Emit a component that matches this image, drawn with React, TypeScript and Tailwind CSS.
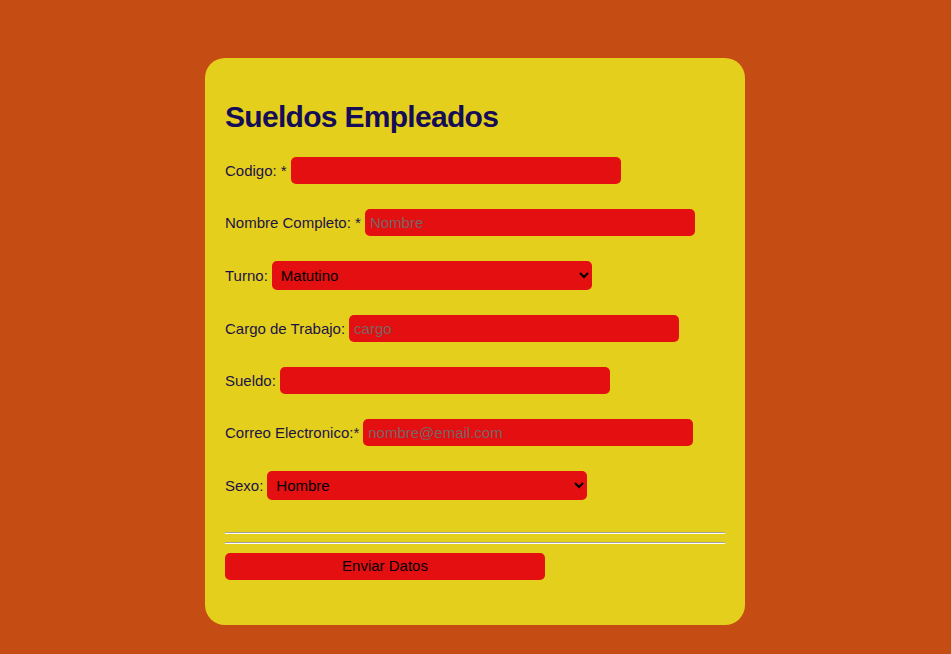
import React from "react";

const inputCls =
  "h-[27px] w-[330px] rounded-[5px] bg-[#e30f10] px-[5px] text-[15px] text-black outline-none placeholder:text-[#7a6464] border-0";
const selectCls =
  "h-[29px] w-[320px] rounded-[5px] bg-[#e30f10] pl-[5px] text-[15px] text-black outline-none border-0";

function Row({ label, children }: { label: string; children: React.ReactNode }) {
  return (
    <div className="flex items-center">
      <span className="mt-[2px] whitespace-pre">{label}</span>
      {children}
    </div>
  );
}

export default function App() {
  return (
    <div
      className="min-h-[654px] w-full bg-[#c54c12] pt-[58px]"
      style={{ fontFamily: '"Liberation Sans", Arial, sans-serif' }}
    >
      <div className="ml-[205px] flex h-[567px] w-[540px] flex-col rounded-[20px] bg-[#e3cf1c] px-[20px] pt-[42px] text-[15px] text-[#1c1246]">
        <h1 className="text-[30px] font-bold leading-[34px] tracking-[-0.7px] text-[#150d55]">
          Sueldos Empleados
        </h1>
        <div className="mt-[23px] flex flex-col gap-[25px]">
          <Row label="Codigo: *">
            <input className={`${inputCls} ml-[4px]`} />
          </Row>
          <Row label="Nombre Completo: *">
            <input className={`${inputCls} ml-[4px]`} placeholder="Nombre" />
          </Row>
          <Row label="Turno:">
            <select className={`${selectCls} ml-[4px]`} defaultValue="Matutino">
              <option>Matutino</option>
              <option>Vespertino</option>
            </select>
          </Row>
          <Row label="Cargo de Trabajo:">
            <input className={`${inputCls} ml-[4px]`} placeholder="cargo" />
          </Row>
          <Row label="Sueldo:">
            <input className={`${inputCls} ml-[4px]`} />
          </Row>
          <Row label="Correo Electronico:*">
            <input className={`${inputCls} ml-[4px]`} placeholder="nombre@email.com" />
          </Row>
          <Row label="Sexo:">
            <select className={`${selectCls} ml-[4px]`} defaultValue="Hombre">
              <option>Hombre</option>
              <option>Mujer</option>
            </select>
          </Row>
        </div>
        <div className="mt-[32px] h-[2px] w-full border-t border-b border-t-[#a0a0a0] border-b-white" />
        <div className="mt-[8px] h-[2px] w-full border-t border-b border-t-[#a0a0a0] border-b-white" />
        <button className="mt-[9px] h-[27px] w-[320px] rounded-[5px] bg-[#e30f10] text-[15px] text-black">
          Enviar Datos
        </button>
      </div>
    </div>
  );
}
